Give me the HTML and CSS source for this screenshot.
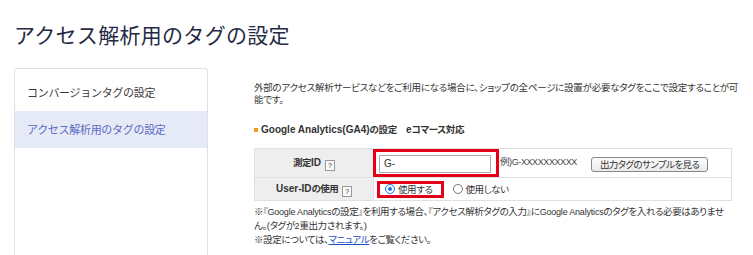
FILE: index.html
```html
<!DOCTYPE html>
<html lang="ja">
<head>
<meta charset="utf-8">
<link rel="stylesheet" href="styles.css">
</head>
<body>
<h1 class="page-title">アクセス解析用のタグの設定</h1>
<div class="layout">
  <nav class="side">
    <a class="side-item">コンバージョンタグの設定</a>
    <a class="side-item active">アクセス解析用のタグの設定</a>
  </nav>
  <main class="content">
    <p class="lead">外部のアクセス解析サービスなどをご利用になる場合に、ショップの全ページに設置が必要なタグをここで設定することが可<br>能です。</p>
    <h2 class="sec-title"><span class="sq"></span><span class="en">Google Analytics(GA4)</span>の設定<span class="gap"></span><span class="en">e</span>コマース対応</h2>
    <table class="form">
      <tr class="r1">
        <th>測定<span class="en">ID</span><span class="help">?</span></th>
        <td>
          <div class="cell">
            <span class="mark mark1"><span class="input">G-</span></span>
            <span class="ex">例<span class="en">)G-XXXXXXXXXX</span></span>
            <span class="btn">出力タグのサンプルを見る</span>
          </div>
        </td>
      </tr>
      <tr class="r2">
        <th><span class="en">User-ID</span>の使用<span class="help">?</span></th>
        <td>
          <div class="cell">
            <span class="mark mark2"><span class="radio on"></span>使用する</span>
            <span class="opt"><span class="radio"></span>使用しない</span>
          </div>
        </td>
      </tr>
    </table>
    <p class="note">※『<span class="en">Google Analytics</span>の設定』を利用する場合、『アクセス解析タグの入力』に<span class="en">Google Analytics</span>のタグを入れる必要はありませ<br>ん。(タグが<span class="en">2</span>重出力されます。)<br>※設定については、<a class="link">マニュアル</a>をご覧ください。</p>
  </main>
</div>
</body>
</html>
```
FILE: styles.css
```css
html, body { margin: 0; padding: 0; background: #fff; }
body { font-family: "Noto Sans CJK JP", "Noto Sans", sans-serif; color: #333; width: 753px; height: 255px; overflow: hidden; }
.page-title { margin: 0; padding: 21px 0 0 14px; height: 47px; box-sizing: border-box; font-size: 21px; font-weight: 400; line-height: 26px; color: #262a45; letter-spacing: 0.3px; }
.layout { display: flex; align-items: flex-start; }
.side { margin-left: 14px; width: 194px; height: 200px; box-sizing: border-box; border: 1px solid #dde0ec; border-radius: 3px; padding-top: 5px; margin-top: 21px; }
.side-item { display: block; height: 37px; line-height: 37px; padding-left: 12px; font-size: 11px; letter-spacing: -0.3px; color: #3a3a3a; }
.side-item.active { background: #e6e9f6; color: #5a69c4; }
.content { margin-left: 46px; width: 478px; font-family: "Liberation Sans", "Noto Sans CJK JP", sans-serif; font-feature-settings: "palt"; font-size: 9.5px; letter-spacing: -0.4px; color: #333; white-space: nowrap; }
.en { letter-spacing: -0.2px; font-size: 9px; }
.lead { margin: 35px 0 0; line-height: 12px; letter-spacing: -0.25px; }
.sec-title { margin: 17px 0 0; font-size: 9.5px; font-weight: 700; line-height: 13px; display: flex; align-items: center; letter-spacing: -0.35px; }
.sec-title .en { font-size: 10px; letter-spacing: 0; }
.gap { width: 9px; }
.sq { width: 4px; height: 4px; background: #f29b1f; margin-right: 3px; }
.form { margin-top: 12px; width: 478px; border-collapse: collapse; border: 1px solid #e0e0e0; }
.form th { width: 118px; background: #eeeeee; border: 1px solid #e0e0e0; font-weight: 700; font-size: 9.5px; letter-spacing: -0.6px; text-align: center; padding: 0; color: #333; }
.form th .en { font-size: 10px; letter-spacing: 0; }
.form td { border: 1px solid #e0e0e0; padding: 0; }
.r1 th, .r1 td { height: 27px; }
.r2 th, .r2 td { height: 22px; }
.help { display: inline-block; width: 8px; height: 9px; border: 1px solid #999; font-size: 7px; line-height: 9px; letter-spacing: 0; text-align: center; font-weight: 400; margin-left: 4px; vertical-align: -2px; background: #fafafa; }
.cell { display: flex; align-items: center; height: 100%; }
.mark { border: 3px solid #e50019; box-sizing: border-box; display: flex; align-items: center; }
.mark1 { width: 126px; height: 28px; margin-left: -1px; padding: 0 3px; }
.input { display: block; width: 112px; height: 18px; margin-top: 2px; box-sizing: border-box; border: 1px solid #a9a9a9; font-size: 10px; letter-spacing: 0; line-height: 16px; padding-left: 4px; background: #fff; font-family: "Liberation Sans", sans-serif; }
.ex { margin-left: 1px; color: #444; align-self: flex-start; margin-top: 5px; }
.ex .en { font-size: 9px; letter-spacing: -0.4px; }
.btn { margin-left: 14px; border: 1px solid #888; border-radius: 3px; padding: 0 8px; height: 13px; line-height: 13px; font-size: 9.5px; letter-spacing: -0.6px; background: linear-gradient(#fdfdfd, #eaeaea); margin-top: 3px; }
.mark2 { height: 17px; padding: 0 8px 0 5px; margin-left: 3px; }
.radio { width: 10px; height: 10px; border-radius: 50%; border: 1px solid #777; box-sizing: border-box; margin-right: 3px; background: #fff; position: relative; display: inline-block; }
.radio.on { border-color: #1a73e8; }
.radio.on::after { content: ""; position: absolute; left: 2px; top: 2px; width: 4px; height: 4px; border-radius: 50%; background: #1a73e8; }
.opt { display: flex; align-items: center; margin-left: 9px; }
.note { margin: 4px 0 0; line-height: 13px; }
.link { color: #1a4ec2; text-decoration: underline; }
```
